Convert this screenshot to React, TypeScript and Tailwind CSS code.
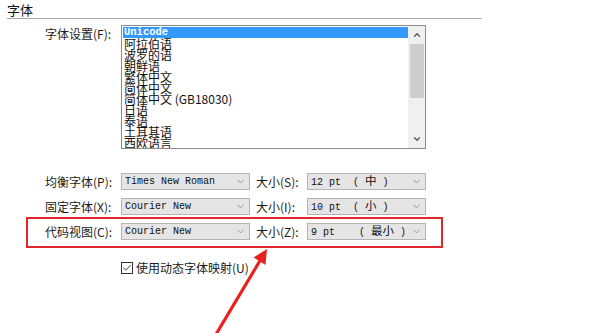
import type { ReactNode } from "react";
import { ChevronDown, ChevronUp, Check } from "lucide-react";

const CJK = { fontFamily: '"Noto Sans CJK SC", "Noto Sans", sans-serif' };
const MONO = { fontFamily: '"Liberation Mono", "Noto Sans CJK SC", monospace' };

const LANGS = [
  "阿拉伯语",
  "波罗的语",
  "朝鲜语",
  "繁体中文",
  "简体中文",
  "简体中文 (GB18030)",
  "日语",
  "泰语",
  "土耳其语",
  "西欧语言",
];

function Select({ value, width }: { value: ReactNode; width: string }) {
  return (
    <div
      className={`flex h-[17px] shrink-0 items-center justify-between overflow-hidden border border-[#b4b4b4] bg-[#e5e5e5] pl-[3px] pr-[3px] ${width}`}
    >
      <span className="whitespace-pre text-[10px] leading-[15px] text-[#111]" style={MONO}>
        {value}
      </span>
      <ChevronDown size={11} strokeWidth={1.6} className="shrink-0 text-[#7a7a7a]" />
    </div>
  );
}

function FontRow({ label, font, sizeLabel, size }: { label: string; font: string; sizeLabel: string; size: ReactNode }) {
  return (
    <div className="flex items-center">
      <div className="w-[76px] shrink-0 text-[12px] leading-none text-[#1a1a1a]" style={CJK}>
        {label}
      </div>
      <Select value={font} width="w-[129px]" />
      <div className="ml-[6px] w-[51px] shrink-0 text-[12px] leading-none text-[#1a1a1a]" style={CJK}>
        {sizeLabel}
      </div>
      <Select value={size} width="w-[119px]" />
    </div>
  );
}

const Zh = ({ children }: { children: string }) => (
  <span className="text-[11.5px] leading-[15px]" style={CJK}>
    {children}
  </span>
);

export default function App() {
  return (
    <div className="relative h-[333px] w-[595px] overflow-hidden bg-white" style={CJK}>
      <div className="pl-[7px] pt-[2px] text-[13px] leading-[15px] text-[#111]">字体</div>
      <div className="ml-[7px] mt-[1px] h-px w-[475px] bg-[#a8a8a8]" />

      {/* encoding list */}
      <div className="mt-[6px] flex pl-[45px]">
        <div className="w-[76px] shrink-0 pt-[3px] text-[12px] leading-none text-[#1a1a1a]">字体设置(F):</div>
        <div className="flex h-[124px] w-[305px] border border-[#8c8c8c] bg-white">
          <div className="flex-1 overflow-hidden pl-px pt-px">
            <div
              className="h-[11px] bg-[#3399ff] pl-[1px] text-[10.5px] font-bold leading-[11px] text-white"
              style={MONO}
            >
              Unicode
            </div>
            {LANGS.map((l) => (
              <div key={l} className="h-[11px] whitespace-pre pl-[1px] text-[12px] leading-[11px] text-[#111]">
                {l}
              </div>
            ))}
          </div>
          <div className="flex w-[17px] flex-col items-center bg-[#f0f0f0]">
            <ChevronUp size={10} strokeWidth={3} className="mt-[4px] text-[#555]" />
            <div className="mt-[4px] h-[54px] w-[14px] bg-[#cdcdcd]" />
            <div className="flex-1" />
            <ChevronDown size={10} strokeWidth={3} className="mb-[4px] text-[#555]" />
          </div>
        </div>
      </div>

      {/* font rows */}
      <div className="mt-[24px] flex flex-col gap-[8px] pl-[45px]">
        <FontRow
          label="均衡字体(P):"
          font="Times New Roman"
          sizeLabel="大小(S):"
          size={<>12 pt  ( <Zh>中</Zh> )</>}
        />
        <FontRow
          label="固定字体(X):"
          font="Courier New"
          sizeLabel="大小(I):"
          size={<>10 pt  ( <Zh>小</Zh> )</>}
        />
      </div>
      <div className="ml-[26px] mt-[2px] w-[417px] border-2 border-[#e0262b] pb-[6px] pl-[17px] pt-[4px]">
        <FontRow
          label="代码视图(C):"
          font="Courier New"
          sizeLabel="大小(Z):"
          size={<>9 pt    ( <Zh>最小</Zh> )</>}
        />
      </div>

      <div className="mt-[14px] flex items-center pl-[121px]">
        <div className="flex h-[12px] w-[12px] items-center justify-center border border-[#333] bg-white">
          <Check size={10} strokeWidth={2.2} className="text-[#222]" />
        </div>
        <span className="ml-[3px] text-[12px] leading-none text-[#1a1a1a]">使用动态字体映射(U)</span>
      </div>

      {/* annotation arrow */}
      <svg className="pointer-events-none absolute left-0 top-0" width="595" height="333" viewBox="0 0 595 333">
        <line x1="215" y1="336" x2="261" y2="259" stroke="#e8231f" strokeWidth="3.2" />
        <polygon points="267,249 265.5,265 253.5,257.5" fill="#e8231f" />
      </svg>
    </div>
  );
}
